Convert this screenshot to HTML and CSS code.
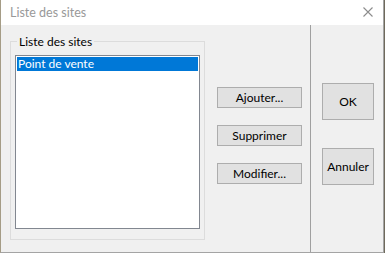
FILE: index.html
```html
<!DOCTYPE html>
<html lang="fr">
<head>
    <meta charset="UTF-8">
    <title>Liste des sites</title>
    <link rel="stylesheet" href="styles.css">
</head>
<body>
    <div class="dialog">
        <div class="titlebar">
            <span class="title">Liste des sites</span>
            <svg class="close" width="10" height="10" viewBox="0 0 10 10">
                <path d="M0.5 0.5 L9.5 9.5 M9.5 0.5 L0.5 9.5" stroke="#8c8c8c" stroke-width="1.1" fill="none"/>
            </svg>
        </div>
        <div class="client">
            <div class="group">
                <span class="group-label">Liste des sites</span>
                <div class="listbox">
                    <div class="item selected">Point de vente</div>
                </div>
            </div>
            <div class="actions">
                <button class="btn">Ajouter...</button>
                <button class="btn">Supprimer</button>
                <button class="btn">Modifier...</button>
            </div>
            <div class="separator"></div>
            <div class="confirm">
                <button class="btn big">OK</button>
                <button class="btn big">Annuler</button>
            </div>
        </div>
    </div>
</body>
</html>
```

FILE: styles.css
```css
body {
    margin: 0;
    background: #6f6a5c;
    font-family: Lato, "Noto Sans", sans-serif;
    font-size: 12px;
}
.dialog {
    width: 382px;
    height: 252px;
    border-left: 1px solid #a59c86;
    border-right: 1px solid #a4a4a4;
    border-bottom: 1px solid #a4a4a4;
    display: flex;
    flex-direction: column;
}
.titlebar {
    height: 31px;
    background: #fff;
    display: flex;
    align-items: center;
    padding-left: 9px;
    padding-right: 10px;
}
.title {
    flex: 1;
    color: #999;
    font-size: 12.5px;
    margin-top: -1px;
}
.close {
    display: block;
    margin-top: -2px;
}
.client {
    flex: 1;
    background: #f0f0f0;
    display: flex;
}
.group {
    position: relative;
    margin: 16px 0 12px 9px;
    width: 185px;
    height: 178px;
    border: 1px solid #dcdcdc;
    padding: 13px 4px 6px 4px;
}
.group-label {
    position: absolute;
    top: -8px;
    left: 6px;
    padding: 0 2px;
    background: #f0f0f0;
    color: #000;
    line-height: 15px;
}
.listbox {
    height: 170px;
    background: #fff;
    border: 1px solid #828790;
    padding: 1px;
}
.item {
    height: 14px;
    line-height: 14px;
    padding-left: 1px;
}
.selected {
    background: #0078d7;
    color: #fff;
}
.actions {
    display: flex;
    flex-direction: column;
    gap: 17px;
    margin: 62px 8px 0 12px;
}
.btn {
    font-family: inherit;
    font-size: 12px;
    color: #000;
    background: #e1e1e1;
    border: 1px solid #adadad;
    width: 85px;
    height: 21px;
    padding: 0;
}
.separator {
    width: 1px;
    background: #a0a0a0;
}
.confirm {
    display: flex;
    flex-direction: column;
    gap: 28px;
    margin: 58px 0 0 11px;
}
.btn.big {
    width: 52px;
    height: 37px;
}
```
